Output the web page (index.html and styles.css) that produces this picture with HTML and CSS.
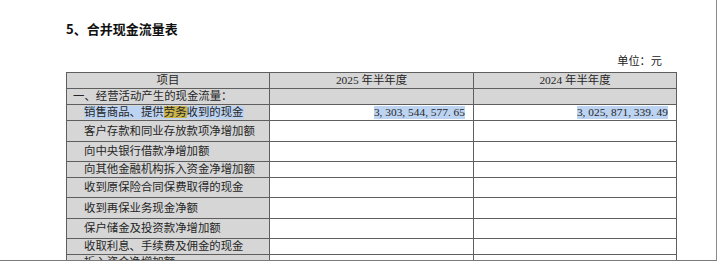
FILE: index.html
```html
<!DOCTYPE html>
<html lang="zh-CN">
<head>
<meta charset="utf-8">
<title>合并现金流量表</title>
<link rel="stylesheet" href="styles.css">
</head>
<body>
<div class="viewer">
  <div class="page">
    <h2 class="title">5、合并现金流量表</h2>
    <div class="unit">单位：元</div>
    <table class="cf">
      <colgroup>
        <col class="c1"><col class="c2"><col class="c3">
      </colgroup>
      <tr class="head h16">
        <td class="center">项目</td>
        <td class="center">2025 年半年度</td>
        <td class="center">2024 年半年度</td>
      </tr>
      <tr class="section h16">
        <td class="lvl1">一、经营活动产生的现金流量：</td>
        <td></td>
        <td></td>
      </tr>
      <tr class="h16">
        <td class="lvl2"><span class="sel">销售商品、提供<span class="hit">劳务</span>收到的现金</span></td>
        <td class="num"><span class="sel">3<span class="p">,</span>303<span class="p">,</span>544<span class="p">,</span>577<span class="p">.</span>65</span></td>
        <td class="num"><span class="sel">3<span class="p">,</span>025<span class="p">,</span>871<span class="p">,</span>339<span class="p">.</span>49</span></td>
      </tr>
      <tr class="h21">
        <td class="lvl2">客户存款和同业存放款项净增加额</td>
        <td></td><td></td>
      </tr>
      <tr class="h20">
        <td class="lvl2">向中央银行借款净增加额</td>
        <td></td><td></td>
      </tr>
      <tr class="h16">
        <td class="lvl2">向其他金融机构拆入资金净增加额</td>
        <td></td><td></td>
      </tr>
      <tr class="h20">
        <td class="lvl2">收到原保险合同保费取得的现金</td>
        <td></td><td></td>
      </tr>
      <tr class="h21">
        <td class="lvl2">收到再保业务现金净额</td>
        <td></td><td></td>
      </tr>
      <tr class="h20">
        <td class="lvl2">保户储金及投资款净增加额</td>
        <td></td><td></td>
      </tr>
      <tr class="h16">
        <td class="lvl2">收取利息、手续费及佣金的现金</td>
        <td></td><td></td>
      </tr>
      <tr class="h16">
        <td class="lvl2">拆入资金净增加额</td>
        <td></td><td></td>
      </tr>
    </table>
  </div>
</div>
</body>
</html>
```

FILE: styles.css
```css
html, body {
  margin: 0;
  padding: 0;
  background: #ffffff;
}

.viewer {
  box-sizing: border-box;
  width: 717px;
  height: 261px;
  border-right: 1px solid #8a8a8a;
  border-bottom: 1px solid #7a7a7a;
  overflow: hidden;
  background: #ffffff;
}

.page {
  padding: 21px 0 0 66px;
}

.title {
  margin: 0;
  font-family: "Noto Sans CJK SC", sans-serif;
  font-size: 13px;
  line-height: 16px;
  font-weight: 700;
  color: #111;
}

.unit {
  width: 596px;
  margin-top: 17px;
  text-align: right;
  font-family: "Liberation Serif", "Noto Sans CJK SC", serif;
  font-size: 11.2px;
  line-height: 14px;
  color: #222;
}

.cf {
  margin-top: 4px;
  width: 611px;
  table-layout: fixed;
  border-collapse: separate;
  border-spacing: 0;
  border-top: 1px solid #5e5e5e;
  border-left: 1px solid #5e5e5e;
  font-family: "Liberation Serif", "Noto Sans CJK SC", serif;
  font-size: 11.4px;
  color: #262626;
}

.c1 { width: 203px; }
.c2 { width: 204px; }
.c3 { width: 203px; }

.cf td {
  box-sizing: border-box;
  padding: 0;
  border-right: 1px solid #5e5e5e;
  border-bottom: 1px solid #5e5e5e;
  line-height: 13px;
  vertical-align: middle;
  white-space: nowrap;
  overflow: hidden;
  background: #ffffff;
}

.cf td:first-child {
  background: #d6d6d6;
}

.head td,
.section td {
  background: #d6d6d6;
}

.h16 td { height: 16px; }
.h20 td { height: 20px; }
.h21 td { height: 21px; }

.center { text-align: center; }

.lvl1 { padding-left: 6px !important; }
.lvl2 { padding-left: 17px !important; }

.num {
  text-align: right;
  padding-right: 8px !important;
}

.p {
  display: inline-block;
  width: 5.7px;
  text-align: left;
}

.sel {
  display: inline-block;
  line-height: 13px;
  background: #bcd3f1;
}

.hit {
  background: #c9b44c;
}
```
